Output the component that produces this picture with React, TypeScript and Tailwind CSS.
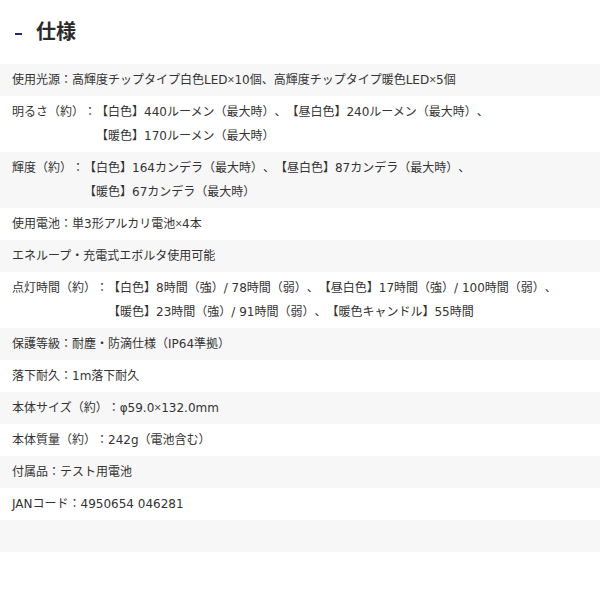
import React from "react";

type Row = { label?: string; lines: string[] };

const rows: Row[] = [
  { lines: ["使用光源：高輝度チップタイプ白色LED×10個、高輝度チップタイプ暖色LED×5個"] },
  {
    label: "明るさ（約）：",
    lines: ["【白色】440ルーメン（最大時）、【昼白色】240ルーメン（最大時）、", "【暖色】170ルーメン（最大時）"],
  },
  {
    label: "輝度（約）：",
    lines: ["【白色】164カンデラ（最大時）、【昼白色】87カンデラ（最大時）、", "【暖色】67カンデラ（最大時）"],
  },
  { lines: ["使用電池：単3形アルカリ電池×4本"] },
  { lines: ["エネループ・充電式エボルタ使用可能"] },
  {
    label: "点灯時間（約）：",
    lines: [
      "【白色】8時間（強）/ 78時間（弱）、【昼白色】17時間（強）/ 100時間（弱）、",
      "【暖色】23時間（強）/ 91時間（弱）、【暖色キャンドル】55時間",
    ],
  },
  { lines: ["保護等級：耐塵・防滴仕様（IP64準拠）"] },
  { lines: ["落下耐久：1m落下耐久"] },
  { lines: ["本体サイズ（約）：φ59.0×132.0mm"] },
  { lines: ["本体質量（約）：242g（電池含む）"] },
  { lines: ["付属品：テスト用電池"] },
  { lines: ["JANコード：4950654 046281"] },
  { lines: [""] },
];

function Line({ text }: { text: string }) {
  const parts = text.split("×");
  return (
    <>
      {parts.map((p, k) => (
        <React.Fragment key={k}>
          {k > 0 && <span className="font-['Open_Sans']">×</span>}
          {p}
        </React.Fragment>
      ))}
    </>
  );
}

export default function App() {
  return (
    <div
      className="w-[600px] h-[600px] bg-white text-[#333333] [text-spacing-trim:space-all]"
      style={{ fontFamily: '"DejaVu Sans", "Noto Sans CJK JP", sans-serif' }}
    >
      <div className="h-16 flex items-center pl-[15px]">
        <div className="w-[7px] h-[2px] bg-[#1c2c6c] mt-[3px]" />
        <div className="ml-[14px] text-[20px] font-bold text-[#2a2a2a] leading-none">仕様</div>
      </div>
      <div className="flex flex-col">
        {rows.map((r, i) => (
          <div
            key={i}
            className={`flex px-3 py-1 text-[12px] leading-6 ${i % 2 === 0 ? "bg-[#f7f7f7]" : "bg-white"}`}
          >
            {r.label && <span className="shrink-0 whitespace-nowrap">{r.label}</span>}
            <div className="flex flex-col">
              {r.lines.map((l, j) => (
                <span key={j} className="whitespace-pre h-6">
                  <Line text={l} />
                </span>
              ))}
            </div>
          </div>
        ))}
      </div>
    </div>
  );
}
